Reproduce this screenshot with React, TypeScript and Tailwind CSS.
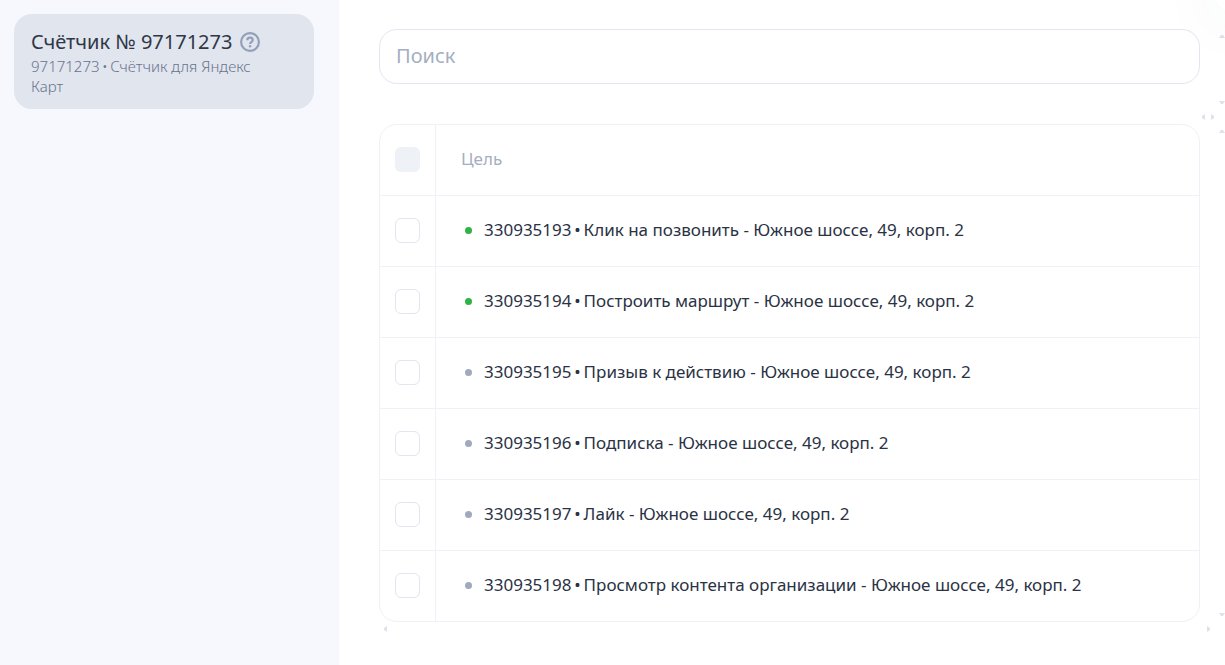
import React from "react";
import clsx from "clsx";

interface Goal {
  id: string;
  name: string;
  active: boolean;
}

const goals: Goal[] = [
  { id: "330935193", name: "Клик на позвонить - Южное шоссе, 49, корп. 2", active: true },
  { id: "330935194", name: "Построить маршрут - Южное шоссе, 49, корп. 2", active: true },
  { id: "330935195", name: "Призыв к действию - Южное шоссе, 49, корп. 2", active: false },
  { id: "330935196", name: "Подписка - Южное шоссе, 49, корп. 2", active: false },
  { id: "330935197", name: "Лайк - Южное шоссе, 49, корп. 2", active: false },
  { id: "330935198", name: "Просмотр контента организации - Южное шоссе, 49, корп. 2", active: false },
];

const arrows = {
  up: "M0 3h6L4 0H2z",
  down: "M0 0h6L4 3H2z",
  left: "M3 0v6L0 4V2z",
  right: "M0 0v6l3-2V2z",
};

function Arrow({ dir }: { dir: keyof typeof arrows }) {
  const vertical = dir === "up" || dir === "down";
  return (
    <svg aria-hidden="true" width={vertical ? 6 : 3} height={vertical ? 3 : 6} className="fill-[#dfe1ed]">
      <path d={arrows[dir]} />
    </svg>
  );
}

function HelpIcon() {
  return (
    <svg width="20" height="20" viewBox="0 0 20 20" fill="none" stroke="#949fba" strokeWidth="2.2">
      <circle cx="10" cy="10" r="8.9" />
      <path d="M7.3 8.2C7.3 6.6 8.4 5.7 10 5.7s2.7.9 2.7 2.3c0 1.2-.7 1.7-1.4 2.1-.8.5-1.2.9-1.2 1.9" />
      <circle cx="10.1" cy="14.2" r="1.2" fill="#949fba" stroke="none" />
    </svg>
  );
}

function CounterCard() {
  return (
    <div className="rounded-[18px] bg-[#e1e5ee] px-[17px] pt-4 pb-[13px]">
      <div className="flex items-center gap-2">
        <h2 className="text-[20px] leading-6 whitespace-nowrap text-[#2f3747]">Счётчик № 97171273</h2>
        <button type="button" aria-label="Справка" className="shrink-0">
          <HelpIcon />
        </button>
      </div>
      <p className="mt-0.5 max-w-[240px] text-[15px] leading-5 font-light text-[#68738d]">
        97171273&#8201;•&#8201;Счётчик для Яндекс Карт
      </p>
    </div>
  );
}

function GoalRow({ goal }: { goal: Goal }) {
  return (
    <tr className="group">
      <td className="border-r border-b border-[#eff1f6] pb-px pl-[15px] group-last:border-b-0">
        <input
          id={goal.id}
          type="checkbox"
          className="block size-[25px] appearance-none rounded-md border border-[#e3e5ef] bg-white checked:bg-[#949fba]"
        />
      </td>
      <td className="h-[71px] border-b border-[#eff1f6] pb-0.5 pl-[29px] group-last:h-[70px] group-last:border-b-0">
        <label htmlFor={goal.id} className="flex items-center text-[17px] leading-6 text-[#2a3244]">
          <span
            className={clsx(
              "mr-3 size-[7px] shrink-0 rounded-full",
              goal.active ? "bg-[#2fb344]" : "bg-[#a0a9bd]"
            )}
          />
          <span>
            {goal.id}&#8201;•&#8201;{goal.name}
          </span>
        </label>
      </td>
    </tr>
  );
}

function ScrollRail() {
  return (
    <div className="flex w-[25px] shrink-0 flex-col items-end pt-[35px] pb-[49px]">
      <div className="flex h-[69px] flex-col justify-between">
        <Arrow dir="up" />
        <Arrow dir="down" />
      </div>
      <div className="my-2.5 flex w-full gap-1.5 pl-0.5">
        <Arrow dir="left" />
        <Arrow dir="right" />
      </div>
      <div className="flex flex-1 flex-col justify-between">
        <Arrow dir="up" />
        <Arrow dir="down" />
      </div>
    </div>
  );
}

export default function App() {
  return (
    <div className="relative flex min-h-screen overflow-hidden bg-white font-['Noto_Sans',sans-serif]">
      <aside className="w-[339px] shrink-0 bg-[#f6f8fd] py-[14px] pr-[25px] pl-[14px]">
        <CounterCard />
      </aside>

      <main className="min-w-0 flex-1 pt-[29px] pl-10">
        <input
          type="search"
          aria-label="Поиск"
          placeholder="Поиск"
          className="block h-[55px] w-full rounded-[18px] border border-[#e3e5f0] bg-white px-4 pb-0.5 text-[20px] text-[#2a3244] outline-none placeholder:text-[#a5aec2]"
        />

        <div className="mt-10 overflow-hidden rounded-[18px] border border-[#eff1f6]">
          <table className="w-full table-fixed border-separate border-spacing-0 text-left">
            <colgroup>
              <col className="w-14" />
              <col />
            </colgroup>
            <thead>
              <tr>
                <th className="border-r border-b border-[#eff1f6] pb-px pl-[15px]">
                  <input
                    type="checkbox"
                    disabled
                    aria-label="Выбрать все цели"
                    className="block size-[25px] appearance-none rounded-md bg-[#eef1f6]"
                  />
                </th>
                <th className="h-[71px] border-b border-[#eff1f6] pb-0.5 pl-[25px] text-[17px] leading-6 font-normal text-[#a5aec2]">
                  Цель
                </th>
              </tr>
            </thead>
            <tbody>
              {goals.map((goal) => (
                <GoalRow key={goal.id} goal={goal} />
              ))}
            </tbody>
          </table>
        </div>
        <div className="mt-1 -mr-2.5 flex justify-between pl-[5px]">
          <Arrow dir="left" />
          <Arrow dir="right" />
        </div>
      </main>

      <ScrollRail />

      {/* corner of the floating close button */}
      <div className="pointer-events-none absolute -top-[27px] -right-[30px] size-10 rounded-full bg-white shadow-[0_4px_60px_8px_rgba(60,70,110,0.05)]" />
    </div>
  );
}
